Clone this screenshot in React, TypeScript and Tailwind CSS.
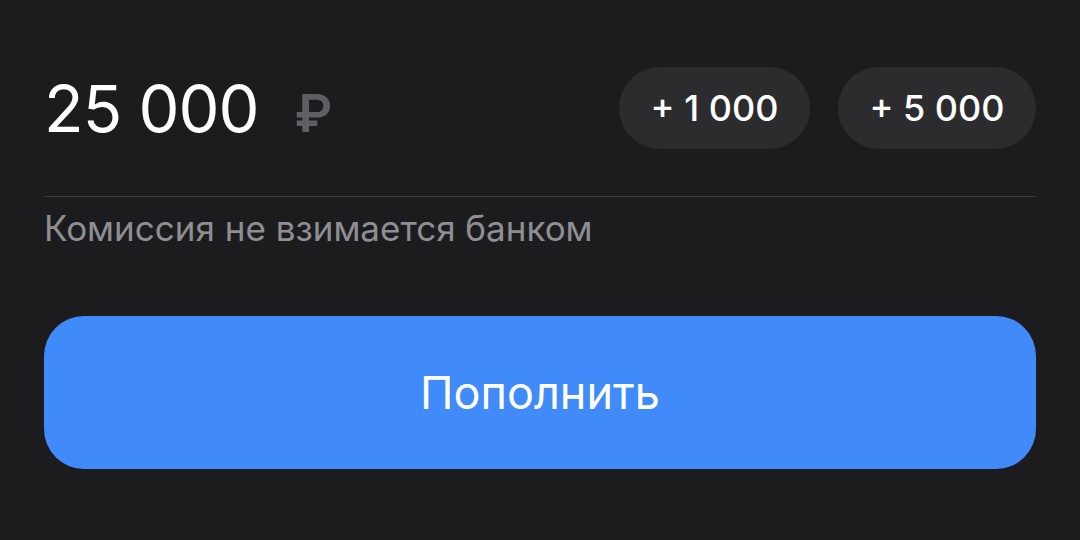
import React from "react";

export default function App() {
  return (
    <div
      className="w-[1080px] h-[540px] bg-[#1c1c1e] px-[44px] pt-[67px] text-white"
      style={{ fontFamily: "Inter, Roboto, 'Noto Sans', sans-serif" }}
    >
      <div className="flex items-center justify-between h-[82px]">
        <div className="flex items-baseline">
          <span className="text-[65px] leading-none font-normal tracking-[-1px]">25 000</span>
          <span className="ml-[36px] text-[52px] leading-none font-semibold text-[#5f5f63]">₽</span>
        </div>
        <div className="flex gap-[28px]">
          <button className="h-[82px] w-[191px] rounded-full bg-[#2c2c2e] text-[36px] font-medium text-white">
            + 1 000
          </button>
          <button className="h-[82px] w-[198px] rounded-full bg-[#2c2c2e] text-[36px] font-medium text-white">
            + 5 000
          </button>
        </div>
      </div>
      <div className="mt-[47px] h-px bg-[#3a3a3c]" />
      <div className="mt-[11px] text-[35px] leading-[40px] text-[#8e8e93]">
        Комиссия не взимается банком
      </div>
      <button className="mt-[68px] w-full h-[153px] rounded-[40px] bg-[#418af9] text-[45px] text-white">
        Пополнить
      </button>
    </div>
  );
}
